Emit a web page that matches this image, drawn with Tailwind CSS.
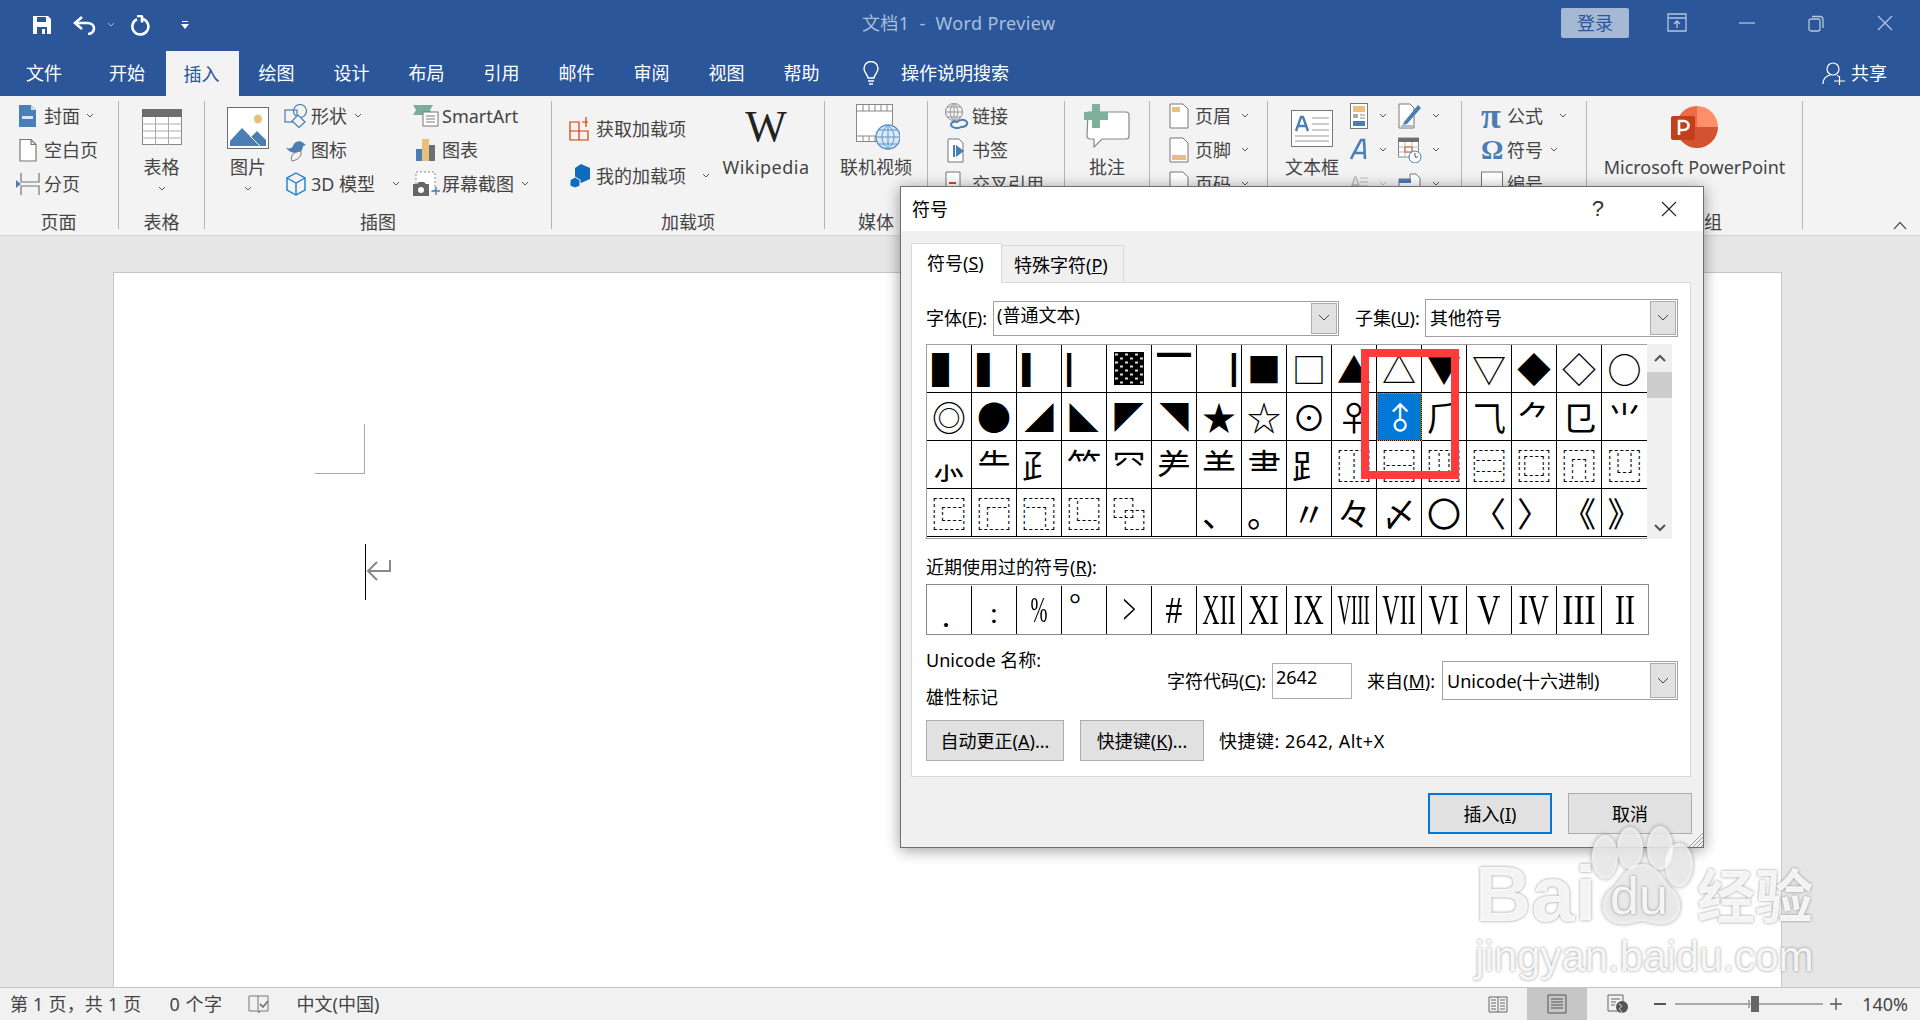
<!doctype html>
<html lang="zh-CN">
<head>
<meta charset="UTF-8" />
<title>文档1 - Word Preview</title>
<script src="https://cdn.jsdelivr.net/npm/@tailwindcss/browser@4"></script>
</head>
<body class="w-[1920px] h-[1020px] overflow-hidden relative flex flex-col text-[18px] leading-6 text-[#444] bg-[#e6e6e6] [font-family:'Noto_Sans','Noto_Sans_CJK_SC',sans-serif]">

<!-- title bar -->
<div class="h-[50px] shrink-0 bg-[#2b579a] flex items-center text-white relative">
  <div class="flex items-center pl-[32px]">
    <svg class="w-[20px] h-[20px]" viewBox="0 0 20 20"><path d="M1 1h15l3 3v15H1z" fill="#fff"/><path d="M5 2h9v5H5z" fill="#2b579a"/><path d="M5 12h10v7H5z" fill="#2b579a"/><path d="M10 14h3v5h-3z" fill="#fff"/></svg>
    <svg class="w-[24px] h-[20px] ml-[21px]" viewBox="0 0 24 20" fill="none" stroke="#fff" stroke-width="2.600"><path d="M9 2 2 8l7 6"/><path d="M2 8h12c5 0 7 3 7 5.500S19 19 15 19"/></svg>
    <svg class="w-[8px] h-[6px] ml-[10px]" viewBox="0 0 8 6" fill="none" stroke="#a9bcd8" stroke-width="1"><path d="m1 1 3 3 3-3"/></svg>
    <svg class="w-[22px] h-[21px] ml-[14px]" viewBox="0 0 22 21" fill="none" stroke="#fff" stroke-width="2.600"><path d="M8 4.300A8 8 0 1 0 14 4"/><path d="M13 .5v7M13 1H8"/></svg>
    <svg class="w-[10px] h-[10px] ml-[29px]" viewBox="0 0 10 10"><path d="M2 1h6v1H2z" fill="#fff"/><path d="M1 4h8L5 9z" fill="#fff"/></svg>
  </div>
  <div class="absolute left-[862px] top-[11px] text-[#a9bfdc] whitespace-pre tracking-[0.35px]">文档1  -  Word Preview</div>
  <div class="ml-auto flex items-center">
    <div class="w-[68px] h-[30px] rounded-[2px] bg-[#a6b9d4] text-[#2b579a] flex items-center justify-center -mt-[4px]">登录</div>
    <svg class="w-[20px] h-[20px] ml-[38px] -mt-[4px]" viewBox="0 0 20 20" fill="none" stroke="#b4c6de" stroke-width="1.300"><path d="M1 1h18v17H1zM1 5h18M10 15V8M7 11l3-3 3 3"/></svg>
    <svg class="w-[16px] h-[16px] ml-[52px] -mt-[4px]" viewBox="0 0 16 16" stroke="#b4c6de" stroke-width="1.300"><path d="M0 8h16"/></svg>
    <svg class="w-[16px] h-[17px] ml-[53px] -mt-[4px]" viewBox="0 0 16 17" fill="none" stroke="#b4c6de" stroke-width="1.300"><rect x="1" y="4" width="11" height="12" rx="2"/><path d="M4 1.500h8a3 3 0 0 1 3 3V13"/></svg>
    <svg class="w-[16px] h-[16px] ml-[53px] mr-[27px] -mt-[4px]" viewBox="0 0 16 16" stroke="#b4c6de" stroke-width="1.300"><path d="M1 1l14 14M15 1 1 15"/></svg>
  </div>
</div>

<!-- tabs -->
<div class="h-[46px] shrink-0 bg-[#2b579a] flex items-start text-white relative">
  <div class="w-[88px] h-[46px] flex items-center justify-center">文件</div>
  <div class="w-[78px] h-[46px] flex items-center justify-center">开始</div>
  <div class="w-[73px] h-[45px] mt-px flex items-center justify-center bg-[#f3f3f3] text-[#2b579a] pr-[2px]">插入</div>
  <div class="w-[75px] h-[46px] flex items-center justify-center">绘图</div>
  <div class="w-[75px] h-[46px] flex items-center justify-center">设计</div>
  <div class="w-[75px] h-[46px] flex items-center justify-center">布局</div>
  <div class="w-[75px] h-[46px] flex items-center justify-center">引用</div>
  <div class="w-[75px] h-[46px] flex items-center justify-center">邮件</div>
  <div class="w-[75px] h-[46px] flex items-center justify-center">审阅</div>
  <div class="w-[75px] h-[46px] flex items-center justify-center">视图</div>
  <div class="w-[75px] h-[46px] flex items-center justify-center">帮助</div>
  <div class="h-[46px] flex items-center ml-[23px]">
    <svg class="w-[18px] h-[24px]" viewBox="0 0 18 24" fill="none" stroke="#fff" stroke-width="1.400"><path d="M6 17c0-3-4-5-4-9.500a7 7 0 0 1 14 0C16 12 12 14 12 17z"/><path d="M6 20h6M7 23h4"/></svg>
    <span class="ml-[21px]">操作说明搜索</span>
  </div>
  <div class="absolute left-[1822px] top-0 h-[46px] flex items-center">
    <svg class="w-[24px] h-[24px]" viewBox="0 0 24 24" fill="none" stroke="#fff" stroke-width="1.200"><circle cx="11" cy="8" r="6"/><path d="M1 23c0-5 3-8 7-9M15 14.500c1 .3 2 .8 2.500 1.500M12 20h11M17.500 15v9"/></svg>
    <span class="ml-[5px]">共享</span>
  </div>
</div>

<!-- ribbon -->
<div class="h-[140px] shrink-0 bg-[#f3f3f3] border-b border-[#d4d4d4] flex items-start relative">
  <!-- 页面 -->
  <div class="w-[119px] h-[128px] mt-[5px] shrink-0 border-r border-[#b5b5b5] flex flex-col">
    <div class="h-[109px] shrink-0 pl-[16px]">
      <div class="flex items-center h-[34px] -mt-[2px]">
        <svg class="w-[24px] h-[24px]" viewBox="0 0 24 24"><path d="M3 1h12l5 5v17H3z" fill="#4a7eb5"/><path d="M15 1v5h5z" fill="#cfdded"/><path d="M6 12h11v3H6z" fill="#fff" opacity=".8"/></svg>
        <span class="ml-[4px]">封面</span>
        <svg class="w-[8px] h-[6px] ml-[6px]" viewBox="0 0 8 6" fill="none" stroke="#555"><path d="m1 1 3 3 3-3"/></svg>
      </div>
      <div class="flex items-center h-[34px]">
        <svg class="w-[24px] h-[24px]" viewBox="0 0 24 24" fill="#fff" stroke="#777" stroke-width="1.200"><path d="M4 1.500h11l5 5V23H4zM15 1.500v5h5"/></svg>
        <span class="ml-[4px]">空白页</span>
      </div>
      <div class="flex items-center h-[34px]">
        <svg class="w-[24px] h-[24px]" viewBox="0 0 24 24" fill="none" stroke="#777" stroke-width="1.200"><path d="M5 1v9h18V1M5 23v-9h18v9"/><path d="M0 8l5 4-5 4z" fill="#4a7eb5" stroke="none"/></svg>
        <span class="ml-[4px]">分页</span>
      </div>
    </div>
    <div class="h-[24px] text-center shrink-0 pr-px">页面</div>
  </div>
  <!-- 表格 -->
  <div class="w-[86px] h-[128px] mt-[5px] shrink-0 border-r border-[#b5b5b5] flex flex-col">
    <div class="h-[109px] shrink-0 flex flex-col items-center">
      <div class="h-[52px] flex items-center">
        <svg class="w-[40px] h-[36px]" viewBox="0 0 40 36"><rect x=".5" y=".5" width="39" height="35" fill="#fff" stroke="#888"/><rect width="40" height="8" fill="#6e6e6e"/><path d="M13.500 8v28M26.500 8v28M0 15h40M0 22h40M0 29h40" stroke="#aaa"/></svg>
      </div>
      <div class="h-[28px] flex items-center">表格</div>
      <svg class="w-[8px] h-[6px] mt-[5px]" viewBox="0 0 8 6" fill="none" stroke="#555"><path d="m1 1 3 3 3-3"/></svg>
    </div>
    <div class="h-[24px] text-center shrink-0">表格</div>
  </div>
  <!-- 插图 -->
  <div class="w-[347px] h-[128px] mt-[5px] shrink-0 border-r border-[#b5b5b5] flex flex-col">
    <div class="h-[109px] shrink-0 flex">
      <div class="w-[60px] ml-[13px] flex flex-col items-center">
        <div class="h-[52px] flex items-center pt-[2px]">
          <svg class="w-[42px] h-[42px]" viewBox="0 0 42 42"><rect x=".5" y=".5" width="41" height="41" fill="#fff" stroke="#6e6e6e"/><ellipse cx="31" cy="12" rx="4" ry="4.500" fill="#e8c07d"/><path d="M3 39V34L15 21l9 9 6-6 9 9v6z" fill="#4a7eb5"/><path d="m23 29 10 10" stroke="#fff"/></svg>
        </div>
        <div class="h-[28px] flex items-center">图片</div>
        <svg class="w-[8px] h-[6px] mt-[5px]" viewBox="0 0 8 6" fill="none" stroke="#555"><path d="m1 1 3 3 3-3"/></svg>
      </div>
      <div class="w-[130px] ml-[6px] -mt-[2px]">
        <div class="flex items-center h-[34px]">
          <svg class="w-[24px] h-[24px]" viewBox="0 0 24 24" fill="none" stroke="#4a7eb5" stroke-width="1.200"><rect x="1" y="6" width="12" height="12" /><circle cx="16" cy="7" r="6.500"/><path d="M14 11l7 7-6 5.500-7-6.500z" fill="#f3f3f3"/></svg>
          <span class="ml-[3px]">形状</span>
          <svg class="w-[8px] h-[6px] ml-[7px]" viewBox="0 0 8 6" fill="none" stroke="#555"><path d="m1 1 3 3 3-3"/></svg>
        </div>
        <div class="flex items-center h-[34px]">
          <svg class="w-[24px] h-[24px]" viewBox="0 0 24 24"><path d="M2 9c3 3 6 1 7-1 1-4 6-6 9-4 2 1 2 2 4 3l-3 1c0 5-4 7-7 7-5 0-9-3-10-6z" fill="#4a7eb5"/><path d="M8 23c-2-4 0-9 9-10 1 5-3 9-9 10z" fill="#f3f3f3" stroke="#777"/></svg>
          <span class="ml-[3px]">图标</span>
        </div>
        <div class="flex items-center h-[34px]">
          <svg class="w-[24px] h-[24px]" viewBox="0 0 24 24" fill="none" stroke="#1b7fc9" stroke-width="1.400"><path d="M12 1l9 5v12l-9 5-9-5V6zM3 6l9 5 9-5M12 11v12"/></svg>
          <span class="ml-[3px] whitespace-pre">3D 模型</span>
          <svg class="w-[8px] h-[6px] ml-[17px]" viewBox="0 0 8 6" fill="none" stroke="#555"><path d="m1 1 3 3 3-3"/></svg>
        </div>
      </div>
      <div class="-mt-[2px] -ml-px">
        <div class="flex items-center h-[34px]">
          <svg class="w-[27px] h-[24px]" viewBox="0 0 27 24"><path d="M0 1h20l-3 5 3 5H0l3-5z" fill="#7aae9c"/><rect x="10" y="8" width="15" height="14" fill="#fff" stroke="#777"/><path d="M13 12h9M13 15h9M13 18h9" stroke="#777"/></svg>
          <span class="ml-[2px]">SmartArt</span>
        </div>
        <div class="flex items-center h-[34px]">
          <svg class="w-[27px] h-[24px]" viewBox="0 0 27 24"><rect x="3" y="11" width="6" height="12" fill="#4a7eb5"/><rect x="9" y="1" width="7" height="22" fill="#e8c07d"/><rect x="16" y="7" width="6" height="16" fill="#6e6e6e"/></svg>
          <span class="ml-[2px]">图表</span>
        </div>
        <div class="flex items-center h-[34px]">
          <svg class="w-[27px] h-[26px]" viewBox="0 0 27 26"><rect x="3" y="1" width="19" height="19" fill="#fff" stroke="#888" stroke-dasharray="2 2"/><path d="M0 13h4l2-2h5l2 2h3v12H0z" fill="#666"/><circle cx="8" cy="19" r="3" fill="#fff"/><path d="M19 20h8M23 16v8" stroke="#4a7eb5" stroke-width="1.400"/></svg>
          <span class="ml-[2px]">屏幕截图</span>
          <svg class="w-[8px] h-[6px] ml-[7px]" viewBox="0 0 8 6" fill="none" stroke="#555"><path d="m1 1 3 3 3-3"/></svg>
        </div>
      </div>
    </div>
    <div class="h-[24px] text-center shrink-0">插图</div>
  </div>
  <!-- 加载项 -->
  <div class="w-[273px] h-[128px] mt-[5px] shrink-0 border-r border-[#b5b5b5] flex flex-col">
    <div class="h-[109px] shrink-0 flex">
      <div class="w-[167px] ml-[17px]">
        <div class="flex items-center h-[34px] mt-[11px]">
          <svg class="w-[24px] h-[24px]" viewBox="0 0 24 24" fill="none" stroke="#d83b01" stroke-width="1.200"><path d="M1 5h9v9H1zM1 14h9v9H1zM10 14h9v9h-9zM10 23V14M19 5h-6M17 0v10"/></svg>
          <span class="ml-[3px]">获取加载项</span>
        </div>
        <div class="flex items-center h-[34px] mt-[13px]">
          <svg class="w-[24px] h-[24px]" viewBox="0 0 24 24"><path d="M12 0l9 4v11l-9 4-6-3V4z" fill="#0f6cbd"/><path d="M6 13l5 3v6l-5 2-5-2v-6z" fill="#0f6cbd" stroke="#f3f3f3"/></svg>
          <span class="ml-[3px]">我的加载项</span>
          <svg class="w-[8px] h-[6px] ml-[16px]" viewBox="0 0 8 6" fill="none" stroke="#555"><path d="m1 1 3 3 3-3"/></svg>
        </div>
      </div>
      <div class="flex flex-col items-center w-[90px] -ml-[15px]">
        <div class="h-[52px] flex items-center text-[#222] text-[44px] [font-family:'Liberation_Serif',serif]">W</div>
        <div class="h-[28px] flex items-center tracking-[0.5px]">Wikipedia</div>
      </div>
    </div>
    <div class="h-[24px] text-center shrink-0">加载项</div>
  </div>
  <!-- 媒体 -->
  <div class="w-[103px] h-[128px] mt-[5px] shrink-0 border-r border-[#b5b5b5] flex flex-col">
    <div class="h-[109px] shrink-0 flex flex-col items-center">
      <div class="h-[52px] flex items-center pl-[4px]">
        <svg class="w-[44px] h-[46px]" viewBox="0 0 44 46"><rect x=".5" y=".5" width="36" height="37" fill="#fff" stroke="#888"/><path d="M1 7h35M1 32h35M7 1v6M13 1v6M19 1v6M25 1v6M31 1v6M7 32v6M13 32v6M19 32v6" stroke="#888"/><circle cx="32" cy="33" r="12" fill="#dbe7f3" stroke="#5d93c9" stroke-width="1.400"/><path d="M20 33h24M32 21v24M23 26h18M23 40h18M32 21c-8 7-8 17 0 24M32 21c8 7 8 17 0 24" fill="none" stroke="#5d93c9"/></svg>
      </div>
      <div class="h-[28px] flex items-center">联机视频</div>
    </div>
    <div class="h-[24px] text-left pl-[33px] shrink-0">媒体</div>
  </div>
  <!-- 链接 -->
  <div class="w-[137px] h-[128px] mt-[5px] shrink-0 border-r border-[#b5b5b5]">
    <div class="-mt-[2px] pl-[17px]">
      <div class="flex items-center h-[34px]">
        <svg class="w-[24px] h-[26px]" viewBox="0 0 24 26"><circle cx="9" cy="9" r="8.500" fill="none" stroke="#888"/><path d="M0 9h18M9 0v18M2 4h14M2 14h14M9 0c-5 5-5 13 0 18M9 0c5 5 5 13 0 18" fill="none" stroke="#999"/><path d="M6 22c0-3 3-4 6-3 3-3 8-3 10 0 1 3-2 5-6 5-3 2-9 1-10-2z" fill="#f3f3f3" stroke="#4a7eb5" stroke-width="2"/></svg>
        <span class="ml-[3px]">链接</span>
      </div>
      <div class="flex items-center h-[34px]">
        <svg class="w-[24px] h-[26px]" viewBox="0 0 24 26"><path d="M3 2h11l4 4v19H3z" fill="#fff" stroke="#777"/><path d="M9 8v12" stroke="#4a7eb5" stroke-width="2"/><path d="M11 8l8 6-8 6z" fill="#4a7eb5"/></svg>
        <span class="ml-[3px]">书签</span>
      </div>
      <div class="flex items-center h-[34px]">
        <svg class="w-[24px] h-[26px]" viewBox="0 0 24 26"><path d="M1 1h14v24H1z" fill="#fff" stroke="#777"/><path d="M4 12h7" stroke="#d0481e" stroke-width="2"/></svg>
        <span class="ml-[3px]">交叉引用</span>
      </div>
    </div>
  </div>
  <!-- 批注 -->
  <div class="w-[85px] h-[128px] mt-[5px] shrink-0 border-r border-[#b5b5b5]">
    <div class="h-[109px] flex flex-col items-center">
      <div class="h-[52px] flex items-start">
        <svg class="w-[46px] h-[44px] mt-[3px]" viewBox="0 0 46 44"><path d="M4 8h38a3 3 0 0 1 3 3v21a3 3 0 0 1-3 3H18l-8 8v-8H6a3 3 0 0 1-3-3z" fill="#fff" stroke="#888" stroke-width="1.200"/><path d="M8 0h8v8h8v8h-8v8H8v-8H0V8h8z" fill="#7fb09a"/></svg>
      </div>
      <div class="h-[28px] flex items-center">批注</div>
    </div>
  </div>
  <!-- 页眉 -->
  <div class="w-[118px] h-[128px] mt-[5px] shrink-0 border-r border-[#b5b5b5]">
    <div class="-mt-[2px] pl-[19px]">
      <div class="flex items-center h-[34px]">
        <svg class="w-[20px] h-[26px]" viewBox="0 0 20 26"><path d="M1 1h13l5 5v19H1z" fill="#fff" stroke="#777"/><path d="M3 4h8v5H3z" fill="#e8c07d"/></svg>
        <span class="ml-[6px]">页眉</span>
        <svg class="w-[8px] h-[6px] ml-[10px]" viewBox="0 0 8 6" fill="none" stroke="#555"><path d="m1 1 3 3 3-3"/></svg>
      </div>
      <div class="flex items-center h-[34px]">
        <svg class="w-[20px] h-[26px]" viewBox="0 0 20 26"><path d="M1 1h13l5 5v19H1z" fill="#fff" stroke="#777"/><path d="M3 18h14v5H3z" fill="#e8c07d"/></svg>
        <span class="ml-[6px]">页脚</span>
        <svg class="w-[8px] h-[6px] ml-[10px]" viewBox="0 0 8 6" fill="none" stroke="#555"><path d="m1 1 3 3 3-3"/></svg>
      </div>
      <div class="flex items-center h-[34px]">
        <svg class="w-[20px] h-[26px]" viewBox="0 0 20 26"><path d="M1 1h13l5 5v19H1z" fill="#fff" stroke="#777"/></svg>
        <span class="ml-[6px]">页码</span>
        <svg class="w-[8px] h-[6px] ml-[10px]" viewBox="0 0 8 6" fill="none" stroke="#555"><path d="m1 1 3 3 3-3"/></svg>
      </div>
    </div>
  </div>
  <!-- 文本 -->
  <div class="w-[194px] h-[128px] mt-[5px] shrink-0 border-r border-[#b5b5b5] flex">
    <div class="w-[56px] ml-[16px] flex flex-col items-center">
      <div class="h-[52px] flex items-center pt-[2px]">
        <svg class="w-[42px] h-[37px]" viewBox="0 0 42 37"><rect x=".5" y=".5" width="41" height="36" fill="#fff" stroke="#777"/><path d="M21 8h17M21 14h17M21 20h17M4 26h34M4 31h34" stroke="#999"/><path d="M5 21l5-14h2l5 14M7 16h8" fill="none" stroke="#4a7eb5" stroke-width="2.400"/></svg>
      </div>
      <div class="h-[28px] flex items-center whitespace-nowrap">文本框</div>
    </div>
    <div class="-mt-[2px] ml-[10px]">
      <div class="flex items-center h-[34px]">
        <svg class="w-[18px] h-[26px]" viewBox="0 0 18 26"><rect x=".5" y=".5" width="17" height="25" fill="#fff" stroke="#777"/><path d="M3 3h12v6H3z" fill="#e8c07d"/><path d="M3 11h5v4H3z" fill="#aaa"/><path d="M10 12h5M10 15h5" stroke="#888"/><path d="M3 18h12v5H3z" fill="#4a7eb5"/></svg>
        <svg class="w-[8px] h-[6px] ml-[11px]" viewBox="0 0 8 6" fill="none" stroke="#555"><path d="m1 1 3 3 3-3"/></svg>
      </div>
      <div class="flex items-center h-[34px]">
        <svg class="w-[18px] h-[26px]" viewBox="0 0 18 26" fill="none" stroke="#4a7eb5" stroke-width="2.600"><path d="M1 22 11 3h3l1 19M5 16h10"/></svg>
        <svg class="w-[8px] h-[6px] ml-[11px]" viewBox="0 0 8 6" fill="none" stroke="#555"><path d="m1 1 3 3 3-3"/></svg>
      </div>
      <div class="flex items-center h-[34px]">
        <svg class="w-[18px] h-[26px]" viewBox="0 0 18 26"><path d="M1 18 5 6h1l4 12M2 14h7" fill="none" stroke="#bbb" stroke-width="1.500"/><path d="M10 7h8M10 11h8M10 15h8" stroke="#bbb"/></svg>
        <svg class="w-[8px] h-[6px] ml-[11px]" viewBox="0 0 8 6" fill="none" stroke="#bbb"><path d="m1 1 3 3 3-3"/></svg>
      </div>
    </div>
    <div class="-mt-[2px] ml-[11px]">
      <div class="flex items-center h-[34px]">
        <svg class="w-[24px] h-[26px]" viewBox="0 0 24 26"><path d="M1 1h11l4 4v20H1z" fill="#fff" stroke="#777"/><path d="M6 19 20 2l3 3L9 21l-4 1z" fill="#4a7eb5"/><path d="M3 23h12" stroke="#4a7eb5"/></svg>
        <svg class="w-[8px] h-[6px] ml-[10px]" viewBox="0 0 8 6" fill="none" stroke="#555"><path d="m1 1 3 3 3-3"/></svg>
      </div>
      <div class="flex items-center h-[34px]">
        <svg class="w-[24px] h-[26px]" viewBox="0 0 24 26"><rect x=".5" y="1" width="20" height="19" fill="#fff" stroke="#888"/><rect y="1" width="21" height="4" fill="#6e6e6e"/><path d="M7 5v15M14 5v15M1 10h20M1 15h20" stroke="#bbb"/><rect x="7" y="10" width="7" height="5" fill="#fff" stroke="#d0481e"/><circle cx="17" cy="20" r="6" fill="#fff" stroke="#4a7eb5"/><path d="M17 16v4h3" fill="none" stroke="#555"/></svg>
        <svg class="w-[8px] h-[6px] ml-[10px]" viewBox="0 0 8 6" fill="none" stroke="#555"><path d="m1 1 3 3 3-3"/></svg>
      </div>
      <div class="flex items-center h-[34px]">
        <svg class="w-[24px] h-[26px]" viewBox="0 0 24 26"><path d="M1 8h11V3h6l4 4v18H1z" fill="#fff" stroke="#777"/><path d="M1 8h12v4H1z" fill="#4a7eb5"/></svg>
        <svg class="w-[8px] h-[6px] ml-[10px]" viewBox="0 0 8 6" fill="none" stroke="#555"><path d="m1 1 3 3 3-3"/></svg>
      </div>
    </div>
  </div>
  <!-- 符号 -->
  <div class="w-[125px] h-[128px] mt-[5px] shrink-0 border-r border-[#b5b5b5]">
    <div class="-mt-[2px] pl-[19px]">
      <div class="flex items-center h-[34px]">
        <span class="w-[26px] text-[36px] font-bold text-[#4a7eb5] [font-family:'Liberation_Serif',serif]">π</span>
        <span>公式</span>
        <svg class="w-[8px] h-[6px] ml-[16px]" viewBox="0 0 8 6" fill="none" stroke="#555"><path d="m1 1 3 3 3-3"/></svg>
      </div>
      <div class="flex items-center h-[34px]">
        <span class="w-[26px] text-[28px] font-bold text-[#4a7eb5] [font-family:'Liberation_Serif',serif]">Ω</span>
        <span>符号</span>
        <svg class="w-[8px] h-[6px] ml-[7px]" viewBox="0 0 8 6" fill="none" stroke="#555"><path d="m1 1 3 3 3-3"/></svg>
      </div>
      <div class="flex items-center h-[34px]">
        <svg class="w-[22px] h-[26px] mr-[4px]" viewBox="0 0 22 26"><rect x=".5" y="1" width="21" height="24" fill="#fff" stroke="#777"/></svg>
        <span>编号</span>
      </div>
    </div>
  </div>
  <!-- PowerPoint -->
  <div class="w-[216px] h-[128px] mt-[5px] shrink-0 border-r border-[#b5b5b5] flex flex-col">
    <div class="h-[109px] shrink-0 flex flex-col items-center">
      <div class="h-[52px] flex items-center">
        <svg class="w-[48px] h-[44px]" viewBox="0 0 48 44"><path d="M26 1a21 21 0 0 1 21 21H26z" fill="#ff8f6b"/><path d="M26 1a21 21 0 0 0-21 21h21z" fill="#ed6c47"/><path d="M5 22a21 21 0 0 0 42 0z" fill="#d35230"/><rect y="11" width="24" height="24" rx="2" fill="#c43e1c"/><path d="M8 30V16h5a4.500 4.500 0 0 1 0 9H8" fill="none" stroke="#fff" stroke-width="2.600"/></svg>
      </div>
      <div class="h-[28px] flex items-center whitespace-nowrap">Microsoft PowerPoint</div>
    </div>
    <div class="h-[24px] text-center shrink-0 pl-px">新建组</div>
  </div>
  <svg class="absolute left-[1893px] top-[125px] w-[14px] h-[9px]" viewBox="0 0 14 9" fill="none" stroke="#555" stroke-width="1.200"><path d="m1 8 6-6.500L13 8"/></svg>
</div>

<!-- document -->
<div class="flex-1 min-h-0 pl-[113px] pt-[36px]">
  <div class="w-[1669px] h-[715px] bg-white border border-b-0 border-[#c6c6c6] relative">
    <div class="absolute left-[201px] top-[151px] w-[50px] h-[50px] border-r border-b border-[#a9a9a9]"></div>
    <div class="absolute left-[251px] top-[271px] w-px h-[56px] bg-black"></div>
    <svg class="absolute left-[252px] top-[286px] w-[26px] h-[24px]" viewBox="0 0 26 24" fill="none" stroke="#888" stroke-width="2"><path d="M24 1v11H2M11 3 2 12l9 9"/></svg>
  </div>
</div>

<!-- status bar -->
<div class="h-[33px] shrink-0 bg-[#f1f1f1] border-t border-[#c6c6c6] flex items-center relative">
  <span class="ml-[10px] tracking-[0.2px] whitespace-pre">第 1 页，共 1 页</span>
  <span class="ml-[28px] tracking-[0.5px] whitespace-pre">0 个字</span>
  <svg class="w-[22px] h-[22px] ml-[25px]" viewBox="0 0 22 22" fill="none" stroke="#777"><path d="M10 3H1v15h9zM10 3h10v15h-9M10 18l1 2 1-2"/><path d="m12 11 3 3 5-6" stroke="#777" stroke-width="1.800"/></svg>
  <span class="ml-[27px]">中文(中国)</span>
  <div class="ml-auto flex items-center h-full">
    <svg class="w-[20px] h-[20px]" viewBox="0 0 20 20" fill="none" stroke="#666"><path d="M10 3H1v15h9zM10 3h9v15h-9M3 6h5M3 9h5M3 12h5M3 15h5M12 6h5M12 9h5M12 12h5M12 15h5"/></svg>
    <div class="w-[60px] h-full ml-[19px] bg-[#c6c6c6] flex items-center justify-center">
      <svg class="w-[20px] h-[20px]" viewBox="0 0 20 20" fill="none" stroke="#555"><path d="M1 1h18v18H1zM4 5h12M4 8h12M4 11h12M4 14h12"/></svg>
    </div>
    <svg class="w-[22px] h-[20px] ml-[20px]" viewBox="0 0 22 20"><path d="M1 1h15v16H1zM4 5h9M4 8h5M4 11h4" fill="none" stroke="#666"/><circle cx="15" cy="13" r="6" fill="#555"/><path d="M12 10c3 1 3 3 1 4s2 3 2 5" stroke="#f1f1f1" fill="none"/></svg>
    <span class="block w-[12px] h-[2px] bg-[#555] ml-[25px]"></span>
    <div class="relative w-[148px] h-[2px] bg-[#a9a9a9] ml-[9px]">
      <span class="absolute left-[73px] -top-[3px] w-[2px] h-[8px] bg-[#a9a9a9]"></span>
      <span class="absolute left-[76px] -top-[7px] w-[8px] h-[16px] bg-[#666]"></span>
    </div>
    <svg class="w-[12px] h-[12px] ml-[7px]" viewBox="0 0 12 12" stroke="#555" stroke-width="1.400"><path d="M0 6h12M6 0v12"/></svg>
    <span class="ml-[20px] mr-[12px]">140%</span>
  </div>
</div>

<!-- symbol dialog -->
<div class="absolute left-[900px] top-[186px] w-[804px] h-[662px] border border-[#6e6e6e] bg-[#f0f0f0] shadow-[0_2px_14px_rgba(0,0,0,0.4)] text-black">
  <div class="h-[44px] bg-white flex items-center pl-[11px]">
    <span>符号</span>
    <span class="ml-auto text-[22px] text-[#333] mr-[57px] [font-family:'Liberation_Sans',sans-serif]">?</span>
    <svg class="w-[16px] h-[16px] mr-[26px]" viewBox="0 0 16 16" stroke="#222" stroke-width="1.100"><path d="m1 1 14 14M15 1 1 15"/></svg>
  </div>
  <div class="pl-[10px] pt-[12px]">
    <div class="flex items-end relative z-10 -mb-px">
      <div class="w-[91px] h-[40px] bg-white border border-b-0 border-[#d9d9d9] pl-[15px] pt-[7px]">符号(<u>S</u>)</div>
      <div class="w-[122px] h-[38px] bg-[#f0f0f0] border border-l-0 border-[#d9d9d9] pl-[12px] pt-[7px]">特殊字符(<u>P</u>)</div>
    </div>
    <div class="w-[780px] h-[495px] bg-white border border-[#d9d9d9] pl-[14px]">
      <!-- font / subset -->
      <div class="flex items-center mt-[16px] h-[38px]">
        <span class="w-[67px]">字体(<u>F</u>):</span>
        <div class="w-[346px] h-[35px] border border-[#a0a0a0] flex items-start pl-[3px] pr-px py-px">
          <span class="flex-1">(普通文本)</span>
          <div class="w-[26px] h-[31px] bg-[#e1e1e1] border border-[#adadad] flex items-center justify-center"><svg class="w-[12px] h-[8px]" viewBox="0 0 12 8" fill="none" stroke="#444"><path d="m1 1 5 5 5-5"/></svg></div>
        </div>
        <span class="w-[70px] ml-[16px]">子集(<u>U</u>):</span>
        <div class="w-[253px] h-[38px] border border-[#a0a0a0] flex items-center pl-[4px] pr-px py-px">
          <span class="flex-1">其他符号</span>
          <div class="w-[26px] h-[34px] bg-[#e1e1e1] border border-[#adadad] flex items-center justify-center"><svg class="w-[12px] h-[8px]" viewBox="0 0 12 8" fill="none" stroke="#444"><path d="m1 1 5 5 5-5"/></svg></div>
        </div>
      </div>
      <!-- symbol grid -->
      <div class="flex mt-[7px] relative">
        <div class="w-[721px] h-[195px] border-l border-t border-b border-[#a0a0a0] grid grid-cols-[repeat(16,45px)] grid-rows-[repeat(4,48px)] content-start text-black [font-family:'Noto_Sans_CJK_SC',sans-serif] text-[34px] leading-none [&>div]:border-b [&>div]:border-r [&>div]:border-black [&>div]:flex [&>div]:items-center [&>div]:justify-center">
          <div>▌</div><div>▍</div><div>▎</div><div>▏</div>
          <div><svg class="w-[30px] h-[33px]" viewBox="0 0 30 33"><defs><pattern id="dots" width="10" height="8" patternUnits="userSpaceOnUse"><rect width="10" height="8" fill="#000"/><rect x="1" y="1.500" width="3" height="2" fill="#ddd"/><rect x="6" y="5.500" width="3" height="2" fill="#ddd"/></pattern></defs><rect width="30" height="33" fill="url(#dots)"/></svg></div>
          <div>▔</div><div>▕</div><div>■</div><div>□</div><div>▲</div><div>△</div><div>▼</div><div>▽</div><div>◆</div><div>◇</div><div class="!border-r-0">○</div>
          <div>◎</div><div>●</div><div class="text-[29px]">◢</div><div class="text-[29px]">◣</div><div class="text-[29px]">◤</div><div class="text-[29px]">◥</div><div>★</div><div>☆</div><div>⊙</div><div>♀</div><div class="bg-[#0078d7] text-white outline-1 outline-dotted outline-offset-[-1px] outline-[#ff8c00]"><span class="rotate-[-45deg] text-[30px]">♂</span></div><div>⺁</div><div>⺄</div><div>⺈</div><div>⺋</div><div class="!border-r-0">⺌</div>
          <div>⺗</div><div>⺧</div><div>⺪</div><div>⺮</div><div>⺳</div><div>⺶</div><div>⺷</div><div>⺻</div><div>⻊</div><div>⿰</div><div>⿱</div><div>⿲</div><div>⿳</div><div>⿴</div><div>⿵</div><div class="!border-r-0">⿶</div>
          <div>⿷</div><div>⿸</div><div>⿹</div><div>⿺</div><div>⿻</div><div>　</div><div>、</div><div>。</div><div>〃</div><div>々</div><div>〆</div><div>〇</div><div>〈</div><div>〉</div><div>《</div><div class="!border-r-0">》</div>
        </div>
        <div class="w-[25px] h-[195px] bg-[#f0f0f0] flex flex-col items-center">
          <svg class="w-[12px] h-[8px] mt-[10px]" viewBox="0 0 12 8" fill="none" stroke="#555" stroke-width="2"><path d="m1 7 5-5 5 5"/></svg>
          <div class="w-full h-[26px] bg-[#cdcdcd] mt-[10px]"></div>
          <svg class="w-[12px] h-[8px] mt-auto mb-[7px]" viewBox="0 0 12 8" fill="none" stroke="#555" stroke-width="2"><path d="m1 1 5 5 5-5"/></svg>
        </div>
        <div class="absolute left-[435px] top-[5px] w-[98px] h-[130px] border-[8px] border-[#ff3b3b]"></div>
      </div>
      <div class="mt-[16px] h-[24px]">近期使用过的符号(<u>R</u>):</div>
      <!-- recent -->
      <div class="mt-[5px] w-[723px] h-[51px] border border-[#888] pt-px grid grid-cols-[repeat(16,45px)] text-black text-[24px] leading-none [font-family:'Liberation_Serif',serif] [&>div]:h-[48px] [&>div]:border-r [&>div]:border-black [&>div]:flex [&>div]:items-center [&>div]:justify-center">
        <div><span class="text-[34px] pt-[12px] -translate-x-[3px]">.</span></div><div><span class="text-[30px] pt-[6px]">:</span></div><div><span class="scale-x-[.85] scale-y-[1.5]">%</span></div><div><span class="text-[30px] -translate-x-[9px] -translate-y-[6px]">°</span></div><div><span class="text-[26px] scale-x-[.9] scale-y-[1.7]">&gt;</span></div><div><span class="scale-x-[1.4] scale-y-[1.6]">#</span></div>
        <div><span class="scale-y-[1.77]">XII</span></div><div><span class="scale-x-[1.2] scale-y-[1.77]">XI</span></div><div><span class="scale-x-[1.2] scale-y-[1.77]">IX</span></div><div><span class="scale-x-[.78] scale-y-[1.77]">VIII</span></div><div><span class="scale-y-[1.77]">VII</span></div><div><span class="scale-x-[1.2] scale-y-[1.77]">VI</span></div><div><span class="scale-x-[1.35] scale-y-[1.77]">V</span></div><div><span class="scale-x-[1.2] scale-y-[1.77]">IV</span></div><div><span class="scale-x-[1.4] scale-y-[1.77]">III</span></div><div class="!border-r-0"><span class="scale-x-[1.25] scale-y-[1.77]">II</span></div>
      </div>
      <!-- info -->
      <div class="h-[85px] flex items-start">
        <div class="w-[241px] pt-[13px]">
          <div class="h-[24px]">Unicode 名称:</div>
          <div class="h-[24px] mt-[13px]">雄性标记</div>
        </div>
        <div class="flex items-center mt-[26px] h-[39px]">
          <span class="w-[105px]">字符代码(<u>C</u>):</span>
          <div class="w-[80px] h-[36px] border border-[#adadad] bg-white pl-[3px] leading-[26px]">2642</div>
          <span class="w-[75px] ml-[15px]">来自(<u>M</u>):</span>
          <div class="w-[236px] h-[39px] border border-[#a0a0a0] flex items-center pl-[4px] pr-px py-px">
            <span class="flex-1">Unicode(十六进制)</span>
            <div class="w-[26px] h-[35px] bg-[#e1e1e1] border border-[#adadad] flex items-center justify-center"><svg class="w-[12px] h-[8px]" viewBox="0 0 12 8" fill="none" stroke="#444"><path d="m1 1 5 5 5-5"/></svg></div>
          </div>
        </div>
      </div>
      <div class="flex items-center">
        <div class="w-[138px] h-[41px] bg-[#e1e1e1] border border-[#adadad] flex items-center justify-center">自动更正(<u>A</u>)...</div>
        <div class="w-[124px] h-[41px] ml-[16px] bg-[#e1e1e1] border border-[#adadad] flex items-center justify-center">快捷键(<u>K</u>)...</div>
        <span class="ml-[15px] tracking-[0.5px]">快捷键: 2642, Alt+X</span>
      </div>
    </div>
    <div class="flex justify-end pr-[11px] mt-[16px]">
      <div class="w-[124px] h-[41px] bg-[#e1e1e1] border-2 border-[#0078d7] flex items-center justify-center">插入(<u>I</u>)</div>
      <div class="w-[124px] h-[41px] ml-[16px] bg-[#e1e1e1] border border-[#adadad] flex items-center justify-center">取消</div>
    </div>
  </div>
  <svg class="absolute right-0 bottom-0 w-[14px] h-[14px]" viewBox="0 0 14 14" stroke="#999"><path d="M0 14 14 0M4 14 14 4M8 14l6-6M12 14l2-2"/></svg>
</div>

<!-- baidu watermark -->
<div class="absolute left-[1475px] top-[826px] w-[345px] h-[156px] pointer-events-none text-white/90 z-20 [text-shadow:0_0_3px_rgba(100,100,100,0.75)] [font-family:'Liberation_Sans',sans-serif]">
  <span class="absolute left-0 top-[28px] text-[78px] leading-[80px] font-bold">Bai</span>
  <svg class="absolute left-[100px] top-0 w-[130px] h-[104px] [filter:drop-shadow(0_0_2px_rgba(100,100,100,0.8))]" viewBox="0 0 130 104" fill="#fff" fill-opacity="0.75"><ellipse cx="30" cy="31" rx="13" ry="22"/><ellipse cx="55" cy="22" rx="13" ry="21"/><ellipse cx="85" cy="22" rx="13" ry="22"/><ellipse cx="104" cy="39" rx="14" ry="22"/><path d="M68 38c16 0 20 18 30 26 12 10 10 34-12 34-10 0-13-3-19-3-7 0-11 4-22 3-20-2-22-24-10-34 11-8 15-26 33-26z"/></svg>
  <span class="absolute left-[135px] top-[42px] text-[52px] leading-[56px]">du</span>
  <span class="absolute left-[222px] top-[32px] text-[58px] leading-[70px] font-bold [font-family:'Noto_Sans_CJK_SC',sans-serif]">经验</span>
  <span class="absolute left-0 top-[106px] text-[42px] leading-[50px] whitespace-nowrap">jingyan.baidu.com</span>
</div>

</body>
</html>
